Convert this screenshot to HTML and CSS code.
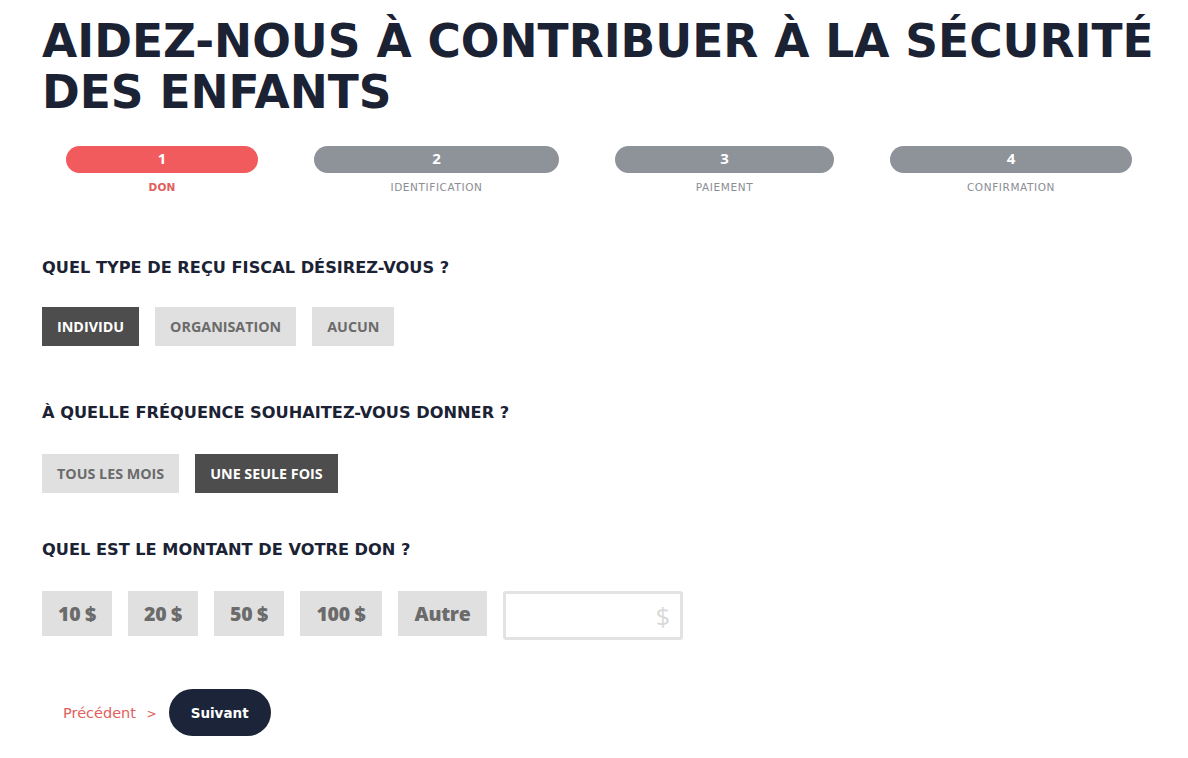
FILE: index.html
```html
<!DOCTYPE html>
<html lang="fr">
<head>
<meta charset="utf-8">
<title>Don</title>
<link rel="stylesheet" href="styles.css">
</head>
<body>
<main class="page">
  <h1 class="title">AIDEZ-NOUS À CONTRIBUER À LA SÉCURITÉ DES ENFANTS</h1>

  <ol class="steps">
    <li class="step step-active"><span class="pill">1</span><span class="step-label">DON</span></li>
    <li class="step"><span class="pill">2</span><span class="step-label">IDENTIFICATION</span></li>
    <li class="step"><span class="pill">3</span><span class="step-label">PAIEMENT</span></li>
    <li class="step"><span class="pill">4</span><span class="step-label">CONFIRMATION</span></li>
  </ol>

  <section class="question q1">
    <h2 class="q-title">QUEL TYPE DE REÇU FISCAL DÉSIREZ-VOUS ?</h2>
    <div class="options">
      <button class="opt opt-on">INDIVIDU</button>
      <button class="opt">ORGANISATION</button>
      <button class="opt">AUCUN</button>
    </div>
  </section>

  <section class="question q2">
    <h2 class="q-title">À QUELLE FRÉQUENCE SOUHAITEZ-VOUS DONNER ?</h2>
    <div class="options">
      <button class="opt">TOUS LES MOIS</button>
      <button class="opt opt-on">UNE SEULE FOIS</button>
    </div>
  </section>

  <section class="question q3">
    <h2 class="q-title">QUEL EST LE MONTANT DE VOTRE DON ?</h2>
    <div class="options amounts">
      <button class="amt">10 $</button>
      <button class="amt">20 $</button>
      <button class="amt">50 $</button>
      <button class="amt amt-wide">100 $</button>
      <button class="amt amt-other">Autre</button>
      <label class="amt-input"><span class="dollar">$</span></label>
    </div>
  </section>

  <div class="nav">
    <a class="prev" href="#">Précédent <span class="chev">&gt;</span></a>
    <button class="next">Suivant</button>
  </div>
</main>
</body>
</html>
```

FILE: styles.css
```css
* { box-sizing: border-box; }
body {
  margin: 0;
  background: #ffffff;
  font-family: "DejaVu Sans", "Noto Sans", sans-serif;
  color: #1b2234;
}
.page {
  padding: 16px 20px 0 42px;
}
.title {
  margin: 0;
  font-family: "DejaVu Sans", sans-serif;
  font-weight: bold;
  font-size: 45.5px;
  line-height: 51px;
  letter-spacing: 0;
  color: #1b2234;
}
.steps {
  list-style: none;
  margin: 28px 0 0 24px;
  padding: 0;
  display: grid;
  grid-template-columns: 192px 245px 219px 242px;
  column-gap: 56px;
}
.step {
  display: flex;
  flex-direction: column;
  align-items: center;
}
.pill {
  display: flex;
  align-items: center;
  justify-content: center;
  width: 100%;
  height: 27px;
  padding-bottom: 3px;
  border-radius: 14px;
  background: #8e9299;
  color: #ffffff;
  font-family: "Open Sans", sans-serif;
  font-weight: 700;
  font-size: 15px;
}
.step-active .pill { background: #f25b5e; }
.step-label {
  margin-top: 8px;
  font-family: "DejaVu Sans", sans-serif;
  font-size: 10.5px;
  letter-spacing: 0.6px;
  color: #8a8d94;
}
.step-active .step-label { color: #e0605d; font-weight: bold; letter-spacing: 0.2px; }

.q1 { margin-top: 65px; }
.q2 { margin-top: 57px; }
.q3 { margin-top: 47px; }
.q-title {
  margin: 0;
  font-family: "DejaVu Sans", sans-serif;
  font-weight: bold;
  font-size: 16.2px;
  line-height: 20px;
  color: #1b2234;
}
.options {
  display: flex;
  gap: 16px;
  margin-top: 29px;
}
.q2 .options { margin-top: 31px; }
.q3 .options { margin-top: 31px; }
.opt {
  border: 0;
  height: 39px;
  padding: 0 15px;
  background: #e0e0e0;
  color: #6b6b6b;
  font-family: "Open Sans", sans-serif;
  font-weight: 700;
  font-size: 14.3px;
}
.opt-on { background: #4d4d4d; color: #ffffff; }
.amt {
  border: 0;
  height: 45px;
  width: 70px;
  padding: 0;
  background: #e0e0e0;
  color: #6b6b6b;
  font-family: "Open Sans", sans-serif;
  font-weight: 800;
  font-size: 19.5px;
  letter-spacing: -0.3px;
}
.amt-wide { width: 82px; }
.amt-other { width: 89px; }
.amt-input {
  width: 180px;
  height: 49px;
  border: 3px solid #e3e3e3;
  border-radius: 3px;
  display: flex;
  align-items: center;
  justify-content: flex-end;
  padding-right: 10px;
}
.dollar {
  font-family: "Open Sans", sans-serif;
  font-size: 25px;
  color: #d8d8d8;
}
.nav {
  display: flex;
  align-items: center;
  margin-top: 49px;
  padding-left: 21px;
}
.prev {
  text-decoration: none;
  color: #e0605d;
  font-family: "DejaVu Sans", sans-serif;
  font-size: 14.5px;
}
.chev { margin-left: 6px; font-size: 12px; }
.next {
  margin-left: 12px;
  width: 102px;
  height: 47px;
  border: 0;
  border-radius: 24px;
  background: #1b2438;
  color: #ffffff;
  font-family: "DejaVu Sans", sans-serif;
  font-weight: bold;
  font-size: 13.5px;
}
```
